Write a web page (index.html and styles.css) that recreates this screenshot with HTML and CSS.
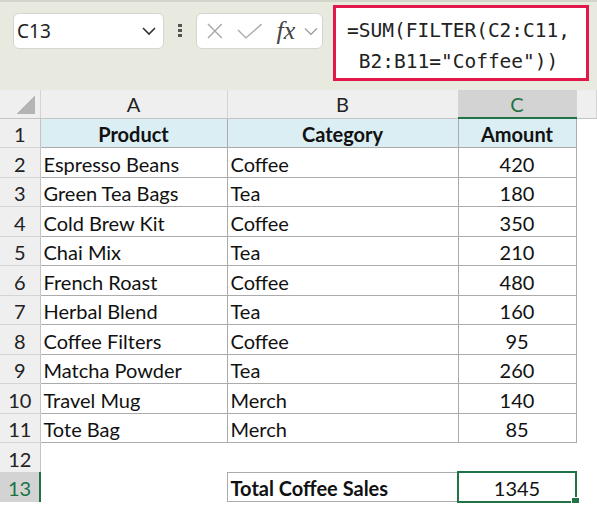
FILE: index.html
```html
<!DOCTYPE html>
<html lang="en">
<head>
    <meta charset="UTF-8">
    <meta name="viewport" content="width=device-width, initial-scale=1.0">
    <title>SUM FILTER</title>
    <link rel="stylesheet" href="styles.css">
</head>
<body>
    <div class="toolbar">
        <div class="namebox">
            <span>C13</span>
            <svg width="16" height="10" viewBox="0 0 16 10"><path d="M2 2 L8 8 L14 2" fill="none" stroke="#333" stroke-width="1.6"/></svg>
        </div>
        <div class="dots"><i></i><i></i><i></i></div>
        <div class="fxbox">
            <svg width="18" height="16" viewBox="0 0 18 16"><path d="M2 1 L16 15 M16 1 L2 15" stroke="#a8a8a8" stroke-width="1.4" fill="none"/></svg>
            <svg width="26" height="16" viewBox="0 0 26 16"><path d="M1 7 L9 15 L25 1" stroke="#a8a8a8" stroke-width="1.4" fill="none"/></svg>
            <span class="fx">fx</span>
            <svg width="14" height="9" viewBox="0 0 14 9"><path d="M1 1.5 L7 7.5 L13 1.5" fill="none" stroke="#999" stroke-width="1.3"/></svg>
        </div>
        <div class="formula">=SUM(FILTER(C2:C11,<br>&nbsp;B2:B11="Coffee"))</div>
    </div>

    <table class="sheet">
        <colgroup>
            <col style="width:40px">
            <col style="width:187px">
            <col style="width:231px">
            <col style="width:118px">
            <col>
        </colgroup>
        <tr class="colhead">
            <th class="corner"></th>
            <th>A</th>
            <th>B</th>
            <th class="sel">C</th>
            <th></th>
        </tr>
        <tr>
            <th class="rowhead">1</th>
            <td class="cell head">Product</td>
            <td class="cell head">Category</td>
            <td class="cell head">Amount</td>
            <td></td>
        </tr>
        <tr><th class="rowhead">2</th><td class="cell">Espresso Beans</td><td class="cell">Coffee</td><td class="cell num">420</td><td></td></tr>
        <tr><th class="rowhead">3</th><td class="cell">Green Tea Bags</td><td class="cell">Tea</td><td class="cell num">180</td><td></td></tr>
        <tr><th class="rowhead">4</th><td class="cell">Cold Brew Kit</td><td class="cell">Coffee</td><td class="cell num">350</td><td></td></tr>
        <tr><th class="rowhead">5</th><td class="cell">Chai Mix</td><td class="cell">Tea</td><td class="cell num">210</td><td></td></tr>
        <tr><th class="rowhead">6</th><td class="cell">French Roast</td><td class="cell">Coffee</td><td class="cell num">480</td><td></td></tr>
        <tr><th class="rowhead">7</th><td class="cell">Herbal Blend</td><td class="cell">Tea</td><td class="cell num">160</td><td></td></tr>
        <tr><th class="rowhead">8</th><td class="cell">Coffee Filters</td><td class="cell">Coffee</td><td class="cell num">95</td><td></td></tr>
        <tr><th class="rowhead">9</th><td class="cell">Matcha Powder</td><td class="cell">Tea</td><td class="cell num">260</td><td></td></tr>
        <tr><th class="rowhead">10</th><td class="cell">Travel Mug</td><td class="cell">Merch</td><td class="cell num">140</td><td></td></tr>
        <tr><th class="rowhead">11</th><td class="cell">Tote Bag</td><td class="cell">Merch</td><td class="cell num">85</td><td></td></tr>
        <tr><th class="rowhead">12</th><td></td><td></td><td></td><td></td></tr>
        <tr>
            <th class="rowhead sel">13</th>
            <td></td>
            <td class="cell bold">Total Coffee Sales</td>
            <td class="cell num active">1345<span class="handle"></span></td>
            <td></td>
        </tr>
    </table>
</body>
</html>
```

FILE: styles.css
```css
body {
    margin: 0;
    background: #fff;
    font-family: Lato, "Liberation Sans", sans-serif;
    overflow: hidden;
}

/* formula bar */
.toolbar {
    height: 90px;
    box-sizing: border-box;
    background: #e9eadf;
    border-top: 2px solid #d3d4ca;
    display: flex;
    align-items: flex-start;
    padding: 3px 0 0 13px;
}
.namebox {
    margin-top: 8px;
    width: 151px;
    height: 36px;
    box-sizing: border-box;
    background: #fff;
    border: 1px solid #d6d6d0;
    border-radius: 6px;
    display: flex;
    align-items: center;
    justify-content: space-between;
    padding: 0 6px 0 3px;
    font-family: "Noto Sans", sans-serif;
    font-size: 19px;
    color: #222;
}
.dots {
    margin: 19px 14px 0;
    width: 4px;
    display: flex;
    flex-direction: column;
    gap: 2px;
}
.dots i {
    display: block;
    width: 4px;
    height: 3px;
    background: #555;
}
.fxbox {
    margin-top: 8px;
    width: 127px;
    height: 36px;
    box-sizing: border-box;
    background: #fff;
    border: 1px solid #d6d6d0;
    border-radius: 6px;
    display: flex;
    align-items: center;
    padding: 0 4px 0 9px;
    gap: 13px;
}
.fx {
    font-family: "Liberation Serif", serif;
    font-style: italic;
    font-size: 26px;
    color: #444;
    margin-left: 1px;
    margin-right: -4px;
    line-height: 1;
}
.formula {
    margin-left: 10px;
    width: 256px;
    height: 76px;
    box-sizing: border-box;
    background: #fff;
    border: 3px solid #e2184b;
    padding: 7px 0 0 11px;
    font-family: "DejaVu Sans Mono", monospace;
    font-size: 19.5px;
    line-height: 31px;
    color: #222;
    white-space: nowrap;
}

/* grid */
.sheet {
    width: 597px;
    table-layout: fixed;
    border-collapse: collapse;
    font-size: 20px;
    color: #111;
}
.sheet tr {
    height: 29.5px;
}
.sheet tr.colhead {
    height: 28px;
}
.sheet td,
.sheet th {
    padding: 0 3px 1px;
    vertical-align: bottom;
    white-space: nowrap;
    overflow: visible;
}
.colhead th {
    background: #efefef;
    font-weight: normal;
    color: #222;
    border-right: 1px solid #d4d4d4;
    border-bottom: 1px solid #c4c4c4;
    text-align: center;
    vertical-align: middle;
    padding: 0;
}
.colhead th.sel {
    background: #d3d3d3;
    color: #217346;
    border-bottom: 2px solid #217346;
}
.colhead th.corner {
    background: linear-gradient(to bottom right, transparent 50%, #b4b4b4 50%) no-repeat right 5px bottom 4px / 18px 19px, #efefef;
}
.rowhead {
    background: #efefef;
    font-weight: normal;
    color: #222;
    text-align: center;
    border-bottom: 1px solid #d4d4d4;
    border-right: 1px solid #c4c4c4;
}
.rowhead.sel {
    background: #d3d3d3;
    color: #217346;
    border-right: 2px solid #217346;
}
.cell {
    border: 1px solid #ababab;
}
.cell.head {
    background: #daeef3;
    font-weight: bold;
    text-align: center;
}
.cell.num {
    text-align: center;
}
.cell.bold {
    font-weight: bold;
}
.cell.active {
    border: 2px solid #217346;
    position: relative;
}
.handle {
    position: absolute;
    right: -5px;
    bottom: -5px;
    width: 7px;
    height: 7px;
    background: #217346;
    border: 1px solid #fff;
}
```
